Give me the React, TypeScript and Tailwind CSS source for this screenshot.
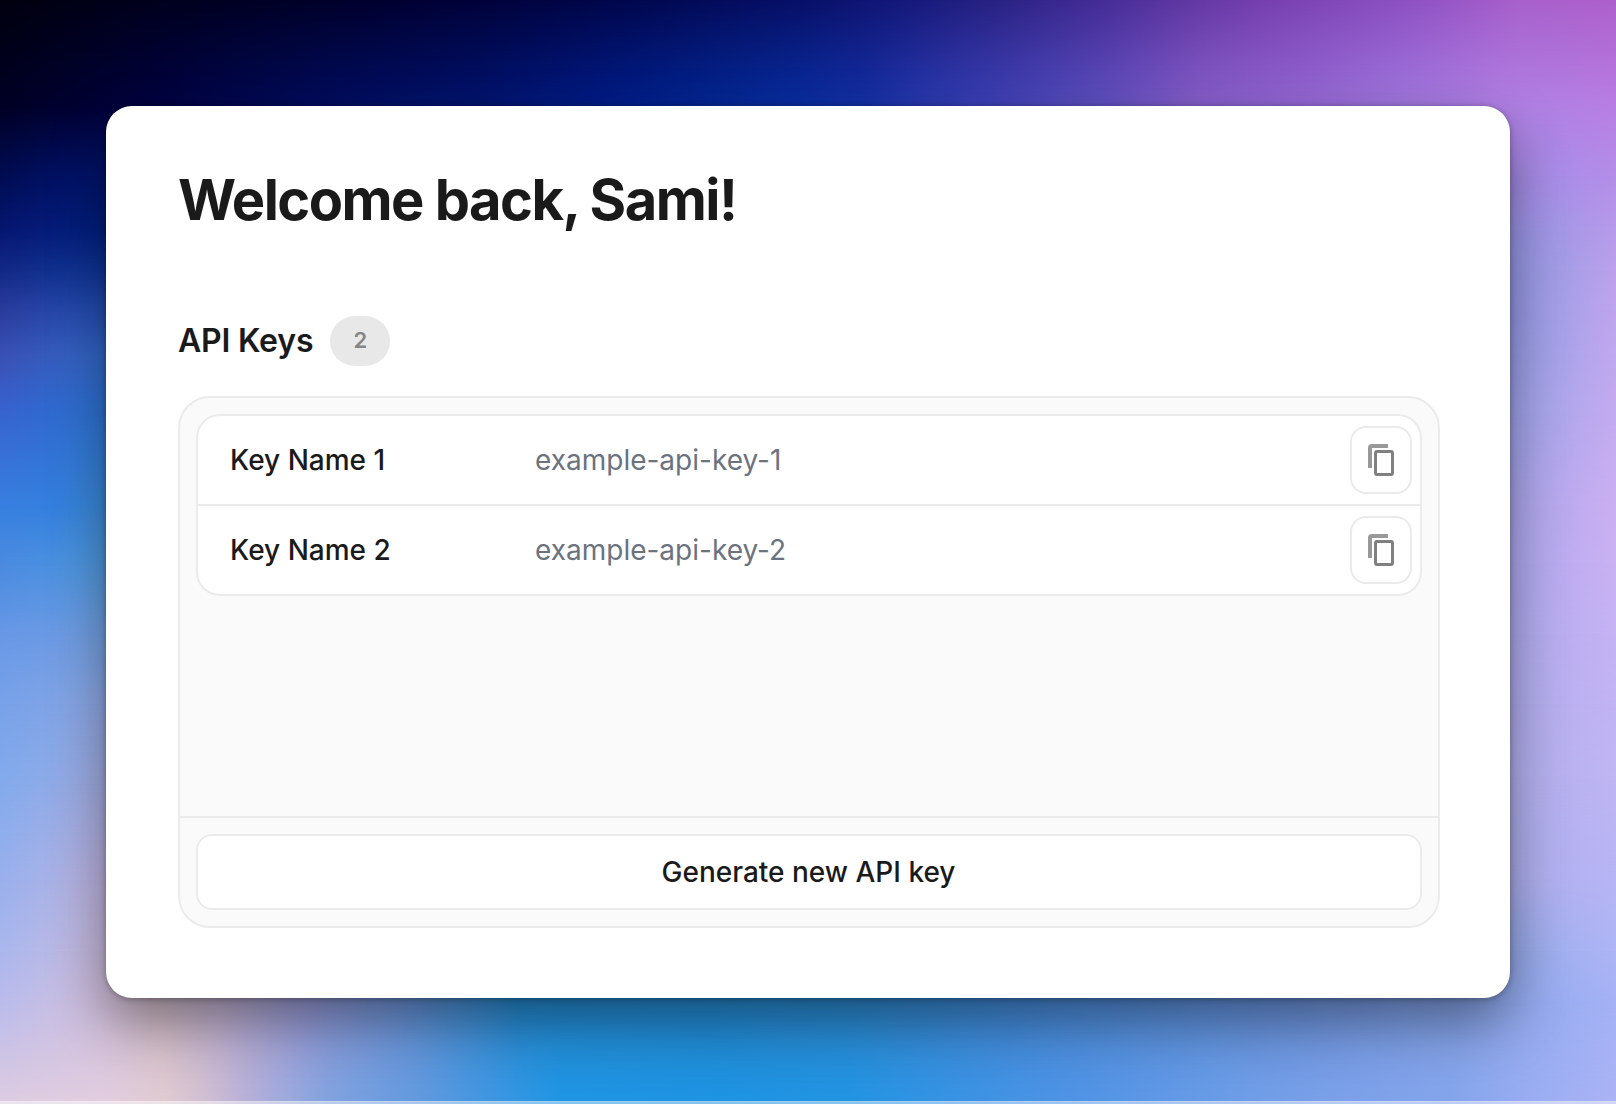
import React from "react";

type Stop = [number, string];
type Band = { y: number; stops: Stop[] };

const W = 1616;

// Colour mesh of the wallpaper: every band is a horizontal gradient that fades in over the band above.
const bands: Band[] = [
  { y: 0, stops: [[0, "#00000f"], [160, "#00001e"], [320, "#00002a"], [480, "#00023a"], [640, "#010850"], [800, "#071068"], [900, "#14187a"], [1000, "#2a2284"], [1100, "#442c96"], [1200, "#6439a4"], [1260, "#753fae"], [1400, "#8c50c2"], [1520, "#a860cc"], [1616, "#ae60cc"]] },
  { y: 106, stops: [[0, "#000024"], [160, "#000242"], [320, "#000c5e"], [480, "#001470"], [600, "#001c88"], [720, "#042896"], [800, "#0a2ea2"], [860, "#1430a6"], [930, "#2c3ab0"], [1000, "#4142b8"], [1100, "#5f50c0"], [1200, "#875fcb"], [1300, "#9468d4"], [1400, "#a077de"], [1500, "#b080e4"], [1563, "#b280e4"], [1616, "#b97ee2"]] },
  { y: 176, stops: [[0, "#000c52"], [53, "#001062"], [106, "#00146c"], [1510, "#a48ae4"], [1563, "#aa8de8"], [1616, "#b48ee8"]] },
  { y: 230, stops: [[0, "#051670"], [53, "#051c7a"], [106, "#00207e"], [1510, "#9a94e6"], [1563, "#a598e6"], [1616, "#b89aea"]] },
  { y: 270, stops: [[0, "#142886"], [53, "#10308e"], [106, "#103496"], [1510, "#9698e6"], [1563, "#a59de6"], [1616, "#bca1ec"]] },
  { y: 310, stops: [[0, "#2a3c9c"], [53, "#2646a8"], [106, "#244eb0"], [1510, "#969ae8"], [1563, "#a7a0e8"], [1616, "#bfa5ee"]] },
  { y: 355, stops: [[0, "#3a50b4"], [53, "#365cbe"], [106, "#3268c6"], [1510, "#9a9ee8"], [1563, "#aaa3ea"], [1616, "#c0a8ee"]] },
  { y: 410, stops: [[0, "#3862ce"], [53, "#306ad0"], [106, "#2e72d2"], [1510, "#a0a4ec"], [1563, "#b0a7ec"], [1616, "#c4abf0"]] },
  { y: 507, stops: [[0, "#3880e0"], [53, "#3480de"], [106, "#3c8ad8"], [1510, "#aca8ee"], [1563, "#bbaaee"], [1616, "#cbb0f2"]] },
  { y: 563, stops: [[0, "#4a8ae0"], [53, "#4a90e0"], [106, "#5098dc"], [1510, "#aeaaf0"], [1563, "#bcacf0"], [1616, "#cab2f3"]] },
  { y: 634, stops: [[0, "#6898e6"], [53, "#6b9ae4"], [106, "#73a0e0"], [1510, "#b0acf0"], [1563, "#bbaef0"], [1616, "#c5b3f4"]] },
  { y: 704, stops: [[0, "#78a2e9"], [53, "#80a4e6"], [106, "#90a8e2"], [1510, "#b0aeee"], [1563, "#bab0f0"], [1616, "#c2b4f4"]] },
  { y: 775, stops: [[0, "#82aaec"], [53, "#8eaae8"], [106, "#a2ace0"], [1510, "#b2b0ee"], [1563, "#b8b1f0"], [1616, "#c0b6f3"]] },
  { y: 880, stops: [[0, "#99b0ed"], [53, "#aab2e6"], [106, "#beb2dc"], [1510, "#acaeec"], [1563, "#b3b1f1"], [1616, "#b7b5f5"]] },
  { y: 951, stops: [[0, "#aab7ed"], [53, "#b9b9e6"], [106, "#c8b8d8"], [1510, "#94aae8"], [1563, "#a3b0f0"], [1616, "#aeb5f5"]] },
  { y: 1000, stops: [[0, "#babbec"], [53, "#c6bee4"], [106, "#cebcd8"], [160, "#d2bcca"], [220, "#c0b0d0"], [300, "#9c9cda"], [400, "#6c94da"], [520, "#248cd4"], [700, "#248ad2"], [850, "#2c8ad4"], [1000, "#428ada"], [1150, "#5890de"], [1300, "#6c94e0"], [1450, "#84a2e8"], [1530, "#94aaee"], [1616, "#a5b2f5"]] },
  { y: 1100, stops: [[0, "#dccbe1"], [100, "#e1cde0"], [165, "#dfcad0"], [205, "#d0bfd2"], [245, "#b8b0d8"], [330, "#80a2de"], [420, "#6299de"], [480, "#4496e0"], [560, "#2095e3"], [720, "#1d93e1"], [850, "#2294e2"], [970, "#3c92e3"], [1080, "#5193e5"], [1240, "#6e9de6"], [1330, "#7aa0e8"], [1450, "#84a4ea"], [1530, "#9aacf2"], [1616, "#abb3f5"]] },
];

function Wallpaper() {
  return (
    <div className="absolute inset-0 overflow-hidden" aria-hidden="true">
      {bands.map((band, i) => {
        const stops = band.stops.map(([x, c]) => `${c} ${((x / W) * 100).toFixed(2)}%`).join(", ");
        const mask = i === 0 ? undefined : `linear-gradient(to bottom, transparent ${bands[i - 1].y}px, black ${band.y}px)`;
        return (
          <div
            key={band.y}
            className="absolute inset-0"
            style={{ backgroundImage: `linear-gradient(to right, ${stops})`, maskImage: mask }}
          />
        );
      })}
      <div className="absolute inset-x-0 bottom-0 h-[3px] border-t border-white/20 bg-white/45" />
    </div>
  );
}

function CopyIcon() {
  return (
    <svg viewBox="0 0 26 32" className="h-[32px] w-[26px]" fill="none" aria-hidden="true">
      <path d="M2 24V4Q2 2 4 2H20" stroke="#989898" strokeWidth="4" />
      <rect x="7.5" y="7.5" width="17" height="23" rx="1.5" stroke="#808080" strokeWidth="3" />
    </svg>
  );
}

const keys = [
  { name: "Key Name 1", value: "example-api-key-1" },
  { name: "Key Name 2", value: "example-api-key-2" },
];

export default function App() {
  return (
    <div className="relative isolate h-[1104px] w-[1616px] overflow-hidden p-[106px] pb-0 font-['Inter',sans-serif] text-[#1a1a1a]">
      <Wallpaper />
      <main className="relative flex h-[892px] flex-col rounded-[26px] bg-white px-[70px] pt-[60px] pl-[72px] shadow-[0_24px_56px_rgba(0,0,0,0.42),0_1px_6px_rgba(0,0,0,0.3)]">
        <h1 className="text-[56px] leading-[68px] font-bold tracking-[-0.0272em] whitespace-nowrap">Welcome back, Sami!</h1>

        <div className="mt-[82px] flex h-[50px] items-center gap-[17px]">
          <h2 className="text-[32px] leading-10 font-semibold tracking-[-0.006em]">API Keys</h2>
          <span className="flex h-[50px] w-[60px] items-center justify-center rounded-[25px] bg-[#e8e8e8] pb-0.5 text-[22px] font-semibold text-[#858585]">2</span>
        </div>

        <section className="mt-[30px] flex h-[532px] flex-col rounded-[32px] border-2 border-[#ebebeb] bg-[#fafafa]">
          <div className="flex-1 p-4">
            <ul className="divide-y-2 divide-[#ebebeb] rounded-[24px] border-2 border-[#ebebeb] bg-white">
              {keys.map((k) => (
                <li key={k.name} className="box-content flex h-[88px] items-center pr-2 pl-8 text-[28px]">
                  <span className="w-[305px] font-medium">{k.name}</span>
                  <span className="flex-1 text-[#6b7280]">{k.value}</span>
                  <button aria-label={`Copy ${k.name}`} className="flex h-[68px] w-[62px] items-center justify-center rounded-[16px] border-2 border-[#ebebeb] bg-white">
                    <CopyIcon />
                  </button>
                </li>
              ))}
            </ul>
          </div>
          <div className="border-t-2 border-[#ebebeb] p-4">
            <button className="flex h-[76px] w-full items-center justify-center rounded-[16px] border-2 border-[#ebebeb] bg-white pr-px text-[28px] font-medium">
              Generate new API key
            </button>
          </div>
        </section>
      </main>
    </div>
  );
}
